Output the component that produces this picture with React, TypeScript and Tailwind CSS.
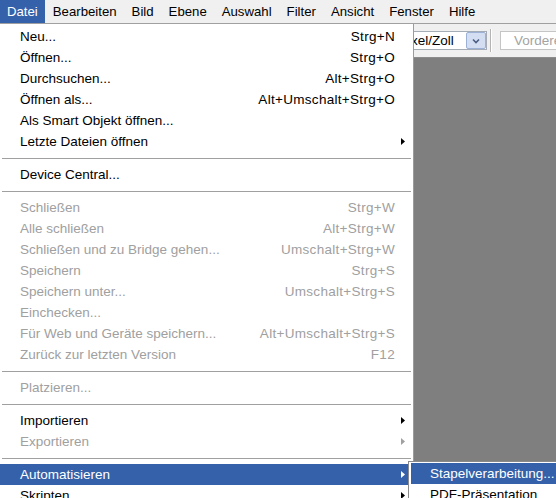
import React from 'react';

type Entry =
  | { sep: true }
  | { label: string; sc?: string; sub?: boolean; disabled?: boolean; active?: boolean; sep?: false };

const menuBar = ['Datei', 'Bearbeiten', 'Bild', 'Ebene', 'Auswahl', 'Filter', 'Ansicht', 'Fenster', 'Hilfe'];

const entries: Entry[] = [
  { label: 'Neu...', sc: 'Strg+N' },
  { label: 'Öffnen...', sc: 'Strg+O' },
  { label: 'Durchsuchen...', sc: 'Alt+Strg+O' },
  { label: 'Öffnen als...', sc: 'Alt+Umschalt+Strg+O' },
  { label: 'Als Smart Objekt öffnen...' },
  { label: 'Letzte Dateien öffnen', sub: true },
  { sep: true },
  { label: 'Device Central...' },
  { sep: true },
  { label: 'Schließen', sc: 'Strg+W', disabled: true },
  { label: 'Alle schließen', sc: 'Alt+Strg+W', disabled: true },
  { label: 'Schließen und zu Bridge gehen...', sc: 'Umschalt+Strg+W', disabled: true },
  { label: 'Speichern', sc: 'Strg+S', disabled: true },
  { label: 'Speichern unter...', sc: 'Umschalt+Strg+S', disabled: true },
  { label: 'Einchecken...', disabled: true },
  { label: 'Für Web und Geräte speichern...', sc: 'Alt+Umschalt+Strg+S', disabled: true },
  { label: 'Zurück zur letzten Version', sc: 'F12', disabled: true },
  { sep: true },
  { label: 'Platzieren...', disabled: true },
  { sep: true },
  { label: 'Importieren', sub: true },
  { label: 'Exportieren', sub: true, disabled: true },
  { sep: true },
  { label: 'Automatisieren', sub: true, active: true },
  { label: 'Skripten', sub: true },
];

const Arrow = ({ color }: { color: string }) => (
  <svg width="4" height="7" viewBox="0 0 4 7">
    <path d="M0 0 L4 3.5 L0 7 Z" fill={color} />
  </svg>
);

export default function App() {
  return (
    <div
      className="relative w-[556px] h-[498px] overflow-hidden bg-[#f0f0f0] flex flex-col text-[13.5px] leading-none"
      style={{ fontFamily: '"Liberation Sans", Arial, sans-serif' }}
    >
      {/* menu bar */}
      <div className="h-[24px] flex shrink-0 border-b border-[#a0a0a0] text-[13.2px]">
        {menuBar.map((m, i) => (
          <div
            key={m}
            className={
              i === 0
                ? 'h-[23px] px-[7px] flex items-center bg-[#3461a9] text-white'
                : 'h-[23px] px-[7px] ml-[1px] flex items-center text-black'
            }
          >
            {m}
          </div>
        ))}
      </div>

      {/* options bar */}
      <div className="h-[34px] shrink-0 flex items-center border-b border-[#8c8c8c]">
        <div className="w-[392px] shrink-0" />
        <div className="w-[95px] h-[19px] shrink-0 bg-white border border-[#a5acb5] flex items-center justify-between">
          <span className="pl-[6px] text-black">Pixel/Zoll</span>
          <div className="w-[20px] h-[17px] bg-[#d3def2] border border-[#9db1d6] rounded-[2px] flex items-center justify-center">
            <svg width="8" height="6" viewBox="0 0 8 6">
              <path d="M1 1.5 L4 4.5 L7 1.5" stroke="#4a5d82" strokeWidth="1.6" fill="none" />
            </svg>
          </div>
        </div>
        <div className="ml-[3px] w-[2px] h-[23px] shrink-0 border-l border-[#b4b4b4] border-r border-r-white" />
        <div className="ml-[8px] w-[70px] h-[19px] shrink-0 bg-white border border-[#c5c5c5] flex items-center pl-[13px] text-[#a3a3a3]">
          Vorderes
        </div>
      </div>

      {/* canvas */}
      <div className="flex-1 bg-[#7f7f7f]" />

      {/* Datei menu */}
      <div className="absolute left-0 top-[24px] w-[414px] bg-white border-r border-[#9c9c9c] pt-[2px]">
        {entries.map((e, i) =>
          e.sep ? (
            <div key={i} className="h-[12px] flex items-center px-[2px]">
              <div className="h-px w-full bg-[#a0a0a0]" />
            </div>
          ) : (
            <div
              key={i}
              className={
                'h-[21px] flex items-center ' +
                (e.active ? 'bg-[#3461a9] text-white' : e.disabled ? 'text-[#a0a0a0]' : 'text-black')
              }
            >
              <span className="pl-[20px] flex-1 whitespace-nowrap">{e.label}</span>
              {e.sc && <span className="whitespace-nowrap tracking-[0.3px]">{e.sc}</span>}
              <span className="w-[18px] shrink-0 flex items-center pl-[6px]">
                {e.sub && <Arrow color={e.active ? '#ffffff' : e.disabled ? '#a0a0a0' : '#000000'} />}
              </span>
            </div>
          )
        )}
      </div>

      {/* Automatisieren submenu */}
      <div className="absolute left-[408px] top-[461px] w-[160px] bg-white border border-[#8a8a8a] pt-[1px] pl-[2px]">
        <div className="h-[21px] flex items-center bg-[#3461a9] text-white pl-[19px] whitespace-nowrap">
          Stapelverarbeitung...
        </div>
        <div className="h-[21px] flex items-center text-black pl-[19px] whitespace-nowrap">PDF-Präsentation</div>
      </div>
    </div>
  );
}
